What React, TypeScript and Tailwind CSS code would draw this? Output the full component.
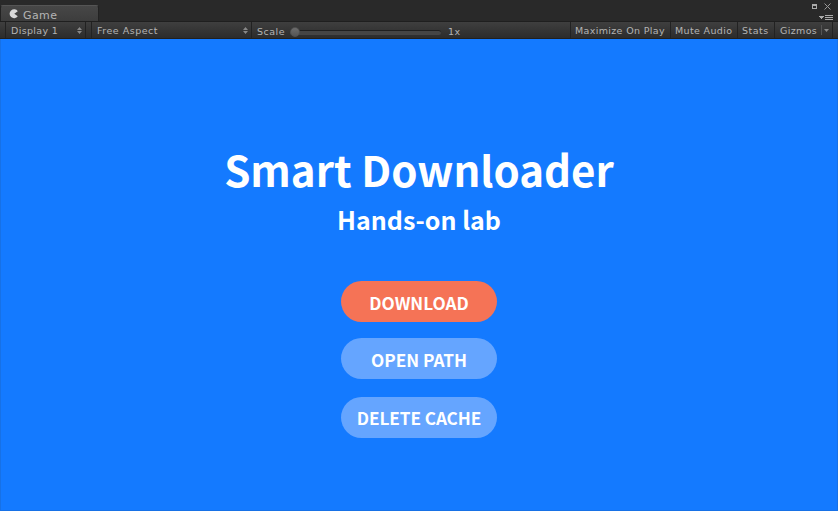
import type { ReactNode } from "react";

function Cell({ className, children }: { className: string; children?: ReactNode }) {
  return (
    <div className={`flex h-full shrink-0 items-center border-l border-[#222222] whitespace-nowrap ${className}`}>
      {children}
    </div>
  );
}

function UpDown() {
  return (
    <svg width="5" height="7" viewBox="0 0 5 7" fill="#888888">
      <path d="M2.500 0 5 3H0zM2.500 7 0 4h5z" />
    </svg>
  );
}

function Header() {
  return (
    <header className="flex h-[21px] justify-between bg-[#292929]">
      <div className="mt-[5px] flex h-4 w-[99px] items-center rounded-t-[3px] border-x border-t border-[#222222] border-t-[#555555] bg-linear-to-b from-[#474747] to-[#3d3d3d] pl-2">
        <svg width="10" height="10" viewBox="0 0 10 10">
          <path d="M8.800 2.200A4.500 4.500 0 1 0 8.800 7.300L5.300 4.800z" fill="#d8d8d8" />
        </svg>
        <span className="mt-1 ml-1 text-[11px] leading-3 tracking-[0.4px] text-[#b4b4b4]">Game</span>
      </div>
      <svg width="28" height="21" viewBox="0 0 28 21" fill="none" shapeRendering="crispEdges">
        <path d="M2.500 4.500h4v4h-4z" stroke="#aaaaaa" />
        <path d="M2 5.500h5" stroke="#aaaaaa" />
        <path d="m14.500 3.500 6 6m0-6-6 6" stroke="#999999" shapeRendering="auto" />
        <path d="M9 16h5l-2.500 3z" fill="#aaaaaa" />
        <path d="M15 15.500h8M15 17.500h8M15 19.500h8" stroke="#aaaaaa" />
      </svg>
    </header>
  );
}

function Toolbar() {
  return (
    <div className="flex h-[18px] items-center border-y border-t-[#1f1f1f] border-b-[#202020] bg-linear-to-b from-[#3f3f3f] to-[#2c2c2c] pl-[5px] text-[9.5px] tracking-[0.35px] text-[#b4b4b4]">
      <Cell className="w-20 justify-between pr-[3px] pl-[5px]">
        <span className="pt-[3px]">Display 1</span>
        <UpDown />
      </Cell>
      <Cell className="w-1.5" />
      <Cell className="w-40 justify-between pr-[3px] pl-[5px]">
        <span className="pt-[3px] tracking-[0.5px]">Free Aspect</span>
        <UpDown />
      </Cell>
      <Cell className="w-[319px] pl-[5px]">
        <span className="w-[33px] pt-1 tracking-[0.5px]">Scale</span>
        <div className="mt-1 flex h-[5px] w-[151px] items-center rounded-full border-t border-[#1f1f1f] bg-[#454545]">
          <div className="-mt-0.5 size-2.5 shrink-0 rounded-full border border-[#505050] bg-linear-to-b from-[#6d6d6d] to-[#555555]" />
        </div>
        <span className="ml-[7px] pt-1">1x</span>
      </Cell>
      <Cell className="w-[100px] pt-[3px] pl-1">Maximize On Play</Cell>
      <Cell className="w-[67px] pt-[3px] pl-1">Mute Audio</Cell>
      <Cell className="w-[37px] pt-[3px] pl-1 tracking-[0.5px]">Stats</Cell>
      <Cell className="w-[58px] pl-[5px]">
        <span className="w-[41px] pt-[3px]">Gizmos</span>
        <span className="h-2.5 w-px bg-[#555555]" />
        <svg width="5" height="3" viewBox="0 0 5 3" className="ml-0.5">
          <path d="M0 0h5L2.500 3z" fill="#8a8a8a" />
        </svg>
      </Cell>
      <Cell className="grow" />
    </div>
  );
}

function Pill({ className, children }: { className: string; children: string }) {
  return (
    <button className={`flex h-[41px] w-[156px] justify-center rounded-full text-[17.2px] font-bold ${className}`}>
      <span className="leading-[40px]">{children}</span>
    </button>
  );
}

export default function App() {
  return (
    <div className="flex h-[511px] w-[838px] flex-col overflow-hidden bg-[#292929] font-['DejaVu_Sans',sans-serif]">
      <Header />
      <Toolbar />
      <main className="flex grow flex-col items-center border-x border-b border-[#1771e6] bg-[#147aff] font-['Noto_Sans_CJK_KR',sans-serif] text-white">
        <h1 className="mt-[98px] text-[42px] leading-[64px] font-bold whitespace-nowrap">Smart Downloader</h1>
        <h2 className="text-[25px] leading-[36px] font-bold whitespace-nowrap">Hands-on lab</h2>
        <div className="mt-11 flex flex-col">
          <Pill className="bg-[#f57356] pt-0.5">DOWNLOAD</Pill>
          <Pill className="mt-4 bg-[#65a5ff] pt-0.5">OPEN PATH</Pill>
          <Pill className="mt-[18px] bg-[#65a5ff] pt-px tracking-[-0.1px]">DELETE CACHE</Pill>
        </div>
      </main>
    </div>
  );
}
